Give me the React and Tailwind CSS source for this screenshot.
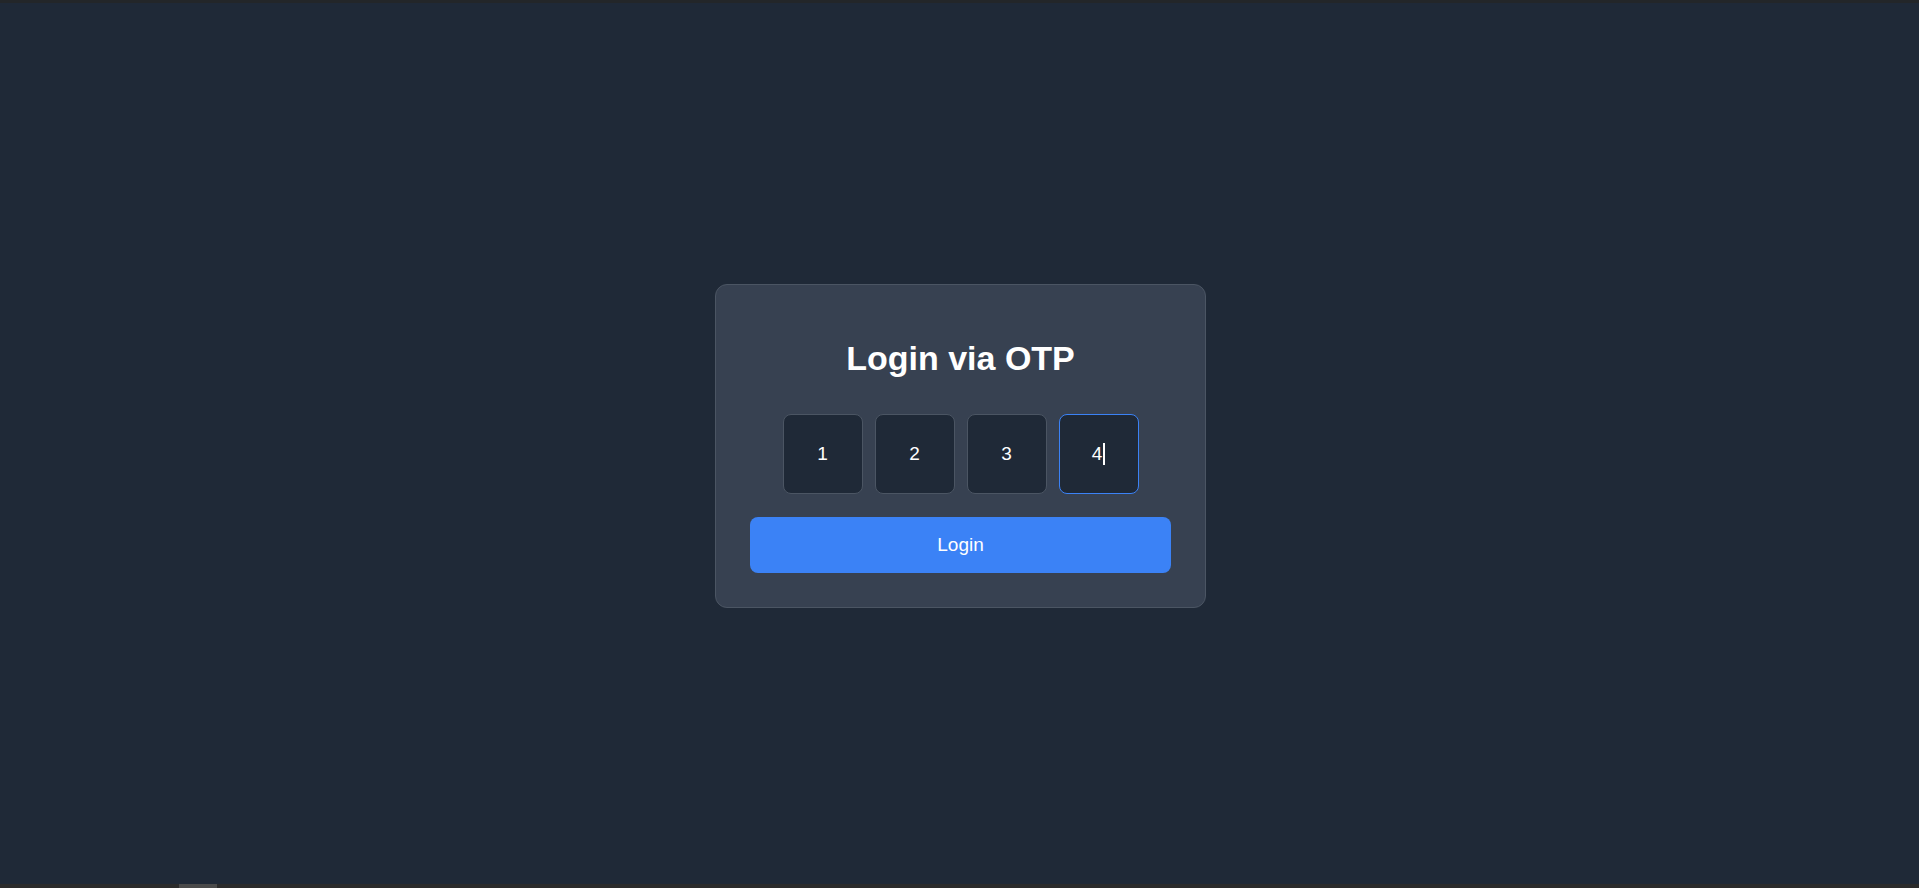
import React from "react";

const digits = ["1", "2", "3", "4"];

const App = () => {
  return (
    <div className="h-screen w-full flex flex-col bg-[#1f2937] font-['Liberation_Sans',Arial,sans-serif] overflow-hidden">
      {/* top strip */}
      <div className="h-[3px] shrink-0 bg-[#232629]" />

      {/* MAIN */}
      <div className="flex-1 flex items-center justify-center pt-[5px] pl-[2px]">
        <div className="w-[491px] bg-[#374151] border border-[#4b5563] rounded-xl pt-[53px] px-[34px] pb-[34px] flex flex-col">
          <h1 className="text-[34px] leading-[40px] font-bold text-white text-center">
            Login via OTP
          </h1>

          {/* OTP BOXES */}
          <div className="mt-[36px] flex justify-center gap-3">
            {digits.map((d, i) => (
              <div
                key={i}
                className={`w-20 h-20 rounded-lg bg-[#1f2937] border flex items-center justify-center text-[19px] text-white ${
                  i === 3 ? "border-[#3b82f6]" : "border-[#4b5563]"
                }`}
              >
                <span>{d}</span>
                {i === 3 && <span className="w-[2px] h-[22px] bg-white ml-[1px]" />}
              </div>
            ))}
          </div>

          <button className="mt-[23px] h-[56px] w-full rounded-lg bg-[#3b82f6] text-white text-[19px]">
            Login
          </button>
        </div>
      </div>

      {/* bottom strip */}
      <div className="h-[4px] shrink-0 bg-[#2b2b2b] flex">
        <div className="w-[179px]" />
        <div className="w-[38px] bg-[#4a4a4a]" />
      </div>
    </div>
  );
};

export default App;
